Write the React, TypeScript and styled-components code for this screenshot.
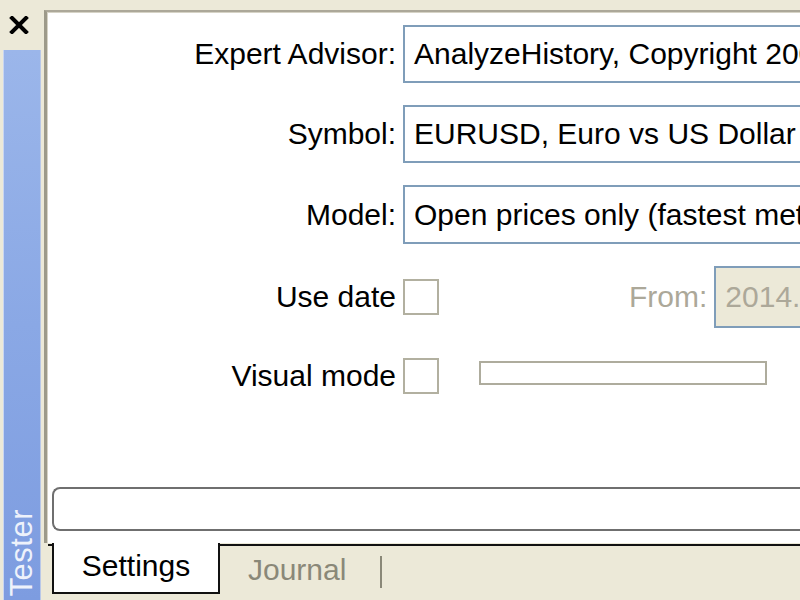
import React from "react";
import styled, { createGlobalStyle } from "styled-components";

const GlobalStyle = createGlobalStyle`
  html, body {
    margin: 0;
    padding: 0;
    background: #ece9d8;
  }
  body {
    width: 800px;
    height: 600px;
    overflow: hidden;
    font-family: "Liberation Sans", Arial, sans-serif;
  }
`;

const Window = styled.div`
  display: flex;
  width: 800px;
  height: 600px;
  background: #ece9d8;
  overflow: hidden;
`;

const Sidebar = styled.div`
  width: 44px;
  display: flex;
  flex-direction: column;
  flex-shrink: 0;
`;

const CloseButton = styled.div`
  height: 50px;
  display: flex;
  justify-content: center;
  padding-top: 16px;
  box-sizing: border-box;
  padding-right: 6px;
`;

const SideTab = styled.div`
  flex: 1;
  margin-left: 3px;
  width: 36px;
  background: linear-gradient(180deg, #9bb6ea 0%, #8aa8e5 50%, #7d9ce0 100%);
  border-left: 1px solid #c9d6f2;
  border-right: 1px solid #b9c8e8;
  display: flex;
  flex-direction: column;
  justify-content: flex-end;
  align-items: center;
  padding-bottom: 4px;
`;

const SideLabel = styled.span`
  writing-mode: vertical-rl;
  transform: rotate(180deg);
  color: #eef2fb;
  font-size: 31px;
  line-height: 30px;
  letter-spacing: 0.5px;
`;

const Main = styled.div`
  flex: 1;
  display: flex;
  flex-direction: column;
  padding-top: 10px;
  min-width: 0;
`;

const Panel = styled.div`
  flex: 1;
  background: #fff;
  border-top: 2px solid #aca899;
  border-left: 3px solid #9d9a8a;
  box-shadow: inset 1px 1px 0 #d6d3c6;
  display: flex;
  flex-direction: column;
  padding: 13px 0 12px 5px;
  min-width: 0;
`;

const Form = styled.div`
  display: flex;
  flex-direction: column;
  gap: 22px;
  flex: 1;
`;

const Row = styled.div<{ $height?: number; $offset?: number }>`
  display: flex;
  align-items: center;
  height: ${({ $height }) => $height ?? 58}px;
  margin-top: ${({ $offset }) => $offset ?? 0}px;
  white-space: nowrap;
`;

const Label = styled.div`
  width: 344px;
  text-align: right;
  font-size: 30px;
  color: #000;
  padding-right: 7px;
  flex-shrink: 0;
`;

const Field = styled.div<{ $disabled?: boolean }>`
  flex: 1;
  height: 100%;
  box-sizing: border-box;
  border: 2px solid #7f9db9;
  border-right: none;
  background: ${({ $disabled }) => ($disabled ? "#ece9d8" : "#fff")};
  color: ${({ $disabled }) => ($disabled ? "#aca899" : "#000")};
  font-size: 30px;
  display: flex;
  align-items: center;
  padding-left: 9px;
  overflow: hidden;
  margin-right: -40px;
`;

const Checkbox = styled.div`
  width: 36px;
  height: 36px;
  box-sizing: border-box;
  border: 2px solid #b2b0a0;
  background: #fff;
  flex-shrink: 0;
`;

const FromLabel = styled.div`
  font-size: 30px;
  color: #aca899;
  margin-left: 190px;
  margin-right: 7px;
`;

const Slider = styled.div`
  width: 288px;
  height: 24px;
  box-sizing: border-box;
  border: 2px solid #aeac9d;
  margin-left: 40px;
  margin-top: -6px;
  background: #fff;
`;

const Progress = styled.div`
  height: 44px;
  box-sizing: border-box;
  border: 2px solid #6f6f6f;
  border-right: none;
  border-radius: 8px 0 0 8px;
  background: #fff;
  margin-right: -10px;
`;

const TabStrip = styled.div`
  height: 57px;
  display: flex;
  align-items: flex-start;
  padding-left: 8px;
`;

const TabLine = styled.div`
  flex: 1;
  align-self: stretch;
  border-top: 2px solid #111;
  margin-top: 1px;
  display: flex;
  align-items: flex-start;
`;

const ActiveTab = styled.div`
  width: 168px;
  height: 51px;
  box-sizing: border-box;
  background: #fff;
  border: 2px solid #111;
  border-top: none;
  font-size: 30px;
  color: #000;
  display: flex;
  align-items: center;
  justify-content: center;
  padding-bottom: 4px;
  flex-shrink: 0;
`;

const TabLeftCap = styled.div`
  width: 4px;
  border-top: 2px solid #111;
  margin-top: 1px;
  margin-left: -4px;
`;

const Tab = styled.div`
  font-size: 30px;
  color: #8a8878;
  padding: 7px 0 0 28px;
  width: 104px;
`;

const Separator = styled.div`
  width: 2px;
  height: 32px;
  background: #8a8878;
  margin-top: 10px;
  margin-left: 28px;
`;

const CloseIcon = () => (
  <svg width="20" height="18" viewBox="0 0 20 18">
    <path d="M3 2 L17 16 M17 2 L3 16" stroke="#000" strokeWidth="4" strokeLinecap="square" />
  </svg>
);

export default function App() {
  return (
    <>
      <GlobalStyle />
      <Window>
        <Sidebar>
          <CloseButton>
            <CloseIcon />
          </CloseButton>
          <SideTab>
            <SideLabel>Tester</SideLabel>
          </SideTab>
        </Sidebar>
        <Main>
          <Panel>
            <Form>
              <Row>
                <Label>Expert Advisor:</Label>
                <Field>AnalyzeHistory, Copyright 2009</Field>
              </Row>
              <Row>
                <Label>Symbol:</Label>
                <Field>EURUSD, Euro vs US Dollar</Field>
              </Row>
              <Row $height={59}>
                <Label>Model:</Label>
                <Field>Open prices only (fastest method)</Field>
              </Row>
              <Row $height={62}>
                <Label>Use date</Label>
                <Checkbox />
                <FromLabel>From:</FromLabel>
                <Field $disabled>2014.01.01</Field>
              </Row>
              <Row $height={40} $offset={6}>
                <Label>Visual mode</Label>
                <Checkbox />
                <Slider />
              </Row>
            </Form>
            <Progress />
          </Panel>
          <TabStrip>
            <TabLeftCap />
            <ActiveTab>Settings</ActiveTab>
            <TabLine>
              <Tab>Journal</Tab>
              <Separator />
            </TabLine>
          </TabStrip>
        </Main>
      </Window>
    </>
  );
}
